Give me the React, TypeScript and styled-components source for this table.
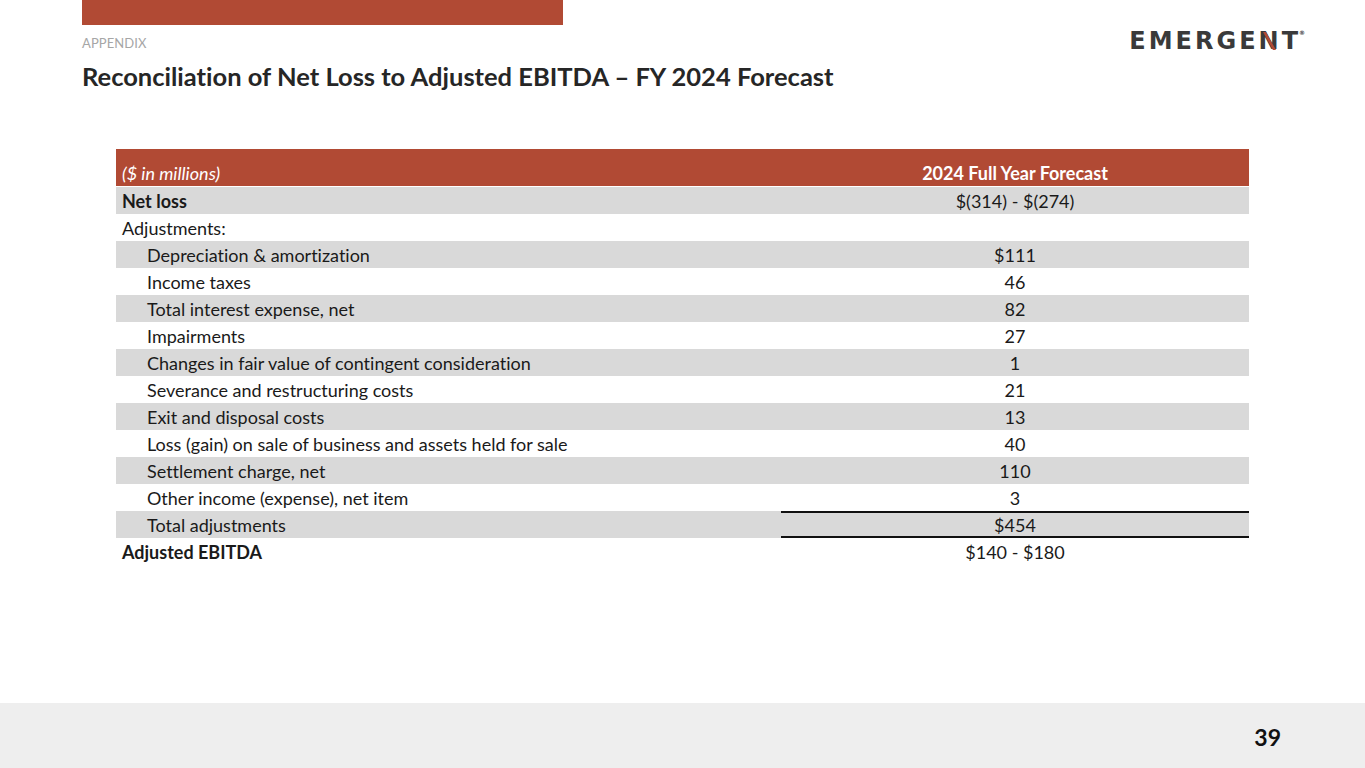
import React from "react";
import styled, { createGlobalStyle } from "styled-components";

const Global = createGlobalStyle`
  html, body { margin: 0; padding: 0; background: #ffffff; }
  body {
    font-family: "Lato", "Liberation Sans", sans-serif;
    font-variant-ligatures: none;
  }
`;

const Page = styled.div`
  width: 1365px;
  height: 768px;
  display: flex;
  flex-direction: column;
  background: #ffffff;
  overflow: hidden;
`;

const Header = styled.header`
  display: flex;
  justify-content: space-between;
  padding: 0 60px 0 82px;
`;

const HeadLeft = styled.div`
  display: flex;
  flex-direction: column;
`;

const TopBar = styled.div`
  width: 481px;
  height: 25px;
  background: #b14a34;
`;

const Kicker = styled.div`
  margin-top: 10px;
  font-size: 13px;
  line-height: 16px;
  color: #a6a6a6;
  letter-spacing: 0.1px;
`;

const Title = styled.h1`
  margin: 10px 0 0 0;
  font-size: 25.5px;
  line-height: 30px;
  font-weight: 700;
  color: #262626;
`;

const Logo = styled.div`
  margin-top: 29px;
  font-family: "DejaVu Sans", sans-serif;
  font-size: 24px;
  line-height: 24px;
  letter-spacing: 3px;
  color: #3a3a3a;
  font-weight: 600;
  display: flex;
  align-items: flex-start;
`;

const LogoN = styled.span`
  position: relative;
  display: inline-block;
  &::after {
    content: "";
    position: absolute;
    left: 4px;
    top: 3px;
    width: 3px;
    height: 18px;
    background: #b14a34;
    transform: skewX(29deg);
    transform-origin: top left;
  }
`;

const Reg = styled.span`
  font-size: 6px;
  line-height: 8px;
  letter-spacing: 0;
  margin-left: -2px;
`;

const Main = styled.main`
  flex: 1;
  padding: 58px 116px 0 116px;
`;

const Table = styled.div`
  display: flex;
  flex-direction: column;
  width: 1133px;
`;

const HeadRow = styled.div`
  display: grid;
  grid-template-columns: 665px 468px;
  height: 37px;
  align-items: end;
  background: #b14a34;
  color: #ffffff;
  font-size: 18px;
  line-height: 24px;
  border-bottom: 1px solid #ffffff;
`;

const HeadLabel = styled.div`
  font-style: italic;
  padding: 0 0 1px 6px;
`;

const HeadValue = styled.div`
  font-weight: 700;
  text-align: center;
  padding-bottom: 1px;
`;

const Row = styled.div<{ $shade: boolean }>`
  display: grid;
  grid-template-columns: 665px 468px;
  height: 27px;
  align-items: center;
  background: ${(p) => (p.$shade ? "#d9d9d9" : "#ffffff")};
  color: #1a1a1a;
  font-size: 18px;
`;

const Label = styled.div<{ $indent: boolean; $bold: boolean }>`
  padding-left: ${(p) => (p.$indent ? "31px" : "6px")};
  font-weight: ${(p) => (p.$bold ? 700 : 400)};
`;

const Value = styled.div<{ $ruled: boolean }>`
  height: 100%;
  display: flex;
  align-items: center;
  justify-content: center;
  box-sizing: border-box;
  border-top: ${(p) => (p.$ruled ? "2px solid #111" : "none")};
  border-bottom: ${(p) => (p.$ruled ? "2px solid #111" : "none")};
`;

const Footer = styled.footer`
  height: 65px;
  background: #eeeeee;
  display: flex;
  align-items: center;
  justify-content: flex-end;
  padding-right: 84px;
`;

const PageNum = styled.div`
  font-size: 23px;
  font-weight: 700;
  color: #111;
  padding-top: 2px;
`;

type R = { label: string; value: string; indent?: boolean; bold?: boolean; ruled?: boolean };

const rows: R[] = [
  { label: "Net loss", value: "$(314) - $(274)", bold: true },
  { label: "Adjustments:", value: "" },
  { label: "Depreciation & amortization", value: "$111", indent: true },
  { label: "Income taxes", value: "46", indent: true },
  { label: "Total interest expense, net", value: "82", indent: true },
  { label: "Impairments", value: "27", indent: true },
  { label: "Changes in fair value of contingent consideration", value: "1", indent: true },
  { label: "Severance and restructuring costs", value: "21", indent: true },
  { label: "Exit and disposal costs", value: "13", indent: true },
  { label: "Loss (gain) on sale of business and assets held for sale", value: "40", indent: true },
  { label: "Settlement charge, net", value: "110", indent: true },
  { label: "Other income (expense), net item", value: "3", indent: true },
  { label: "Total adjustments", value: "$454", indent: true, ruled: true },
  { label: "Adjusted EBITDA", value: "$140 - $180", bold: true },
];

export default function App() {
  return (
    <Page>
      <Global />
      <Header>
        <HeadLeft>
          <TopBar />
          <Kicker>APPENDIX</Kicker>
          <Title>Reconciliation of Net Loss to Adjusted EBITDA – FY 2024 Forecast</Title>
        </HeadLeft>
        <Logo>
          EMERGE<LogoN>N</LogoN>T<Reg>®</Reg>
        </Logo>
      </Header>
      <Main>
        <Table>
          <HeadRow>
            <HeadLabel>($ in millions)</HeadLabel>
            <HeadValue>2024 Full Year Forecast</HeadValue>
          </HeadRow>
          {rows.map((r, i) => (
            <Row key={r.label} $shade={i % 2 === 0}>
              <Label $indent={!!r.indent} $bold={!!r.bold}>{r.label}</Label>
              <Value $ruled={!!r.ruled}>{r.value}</Value>
            </Row>
          ))}
        </Table>
      </Main>
      <Footer>
        <PageNum>39</PageNum>
      </Footer>
    </Page>
  );
}
